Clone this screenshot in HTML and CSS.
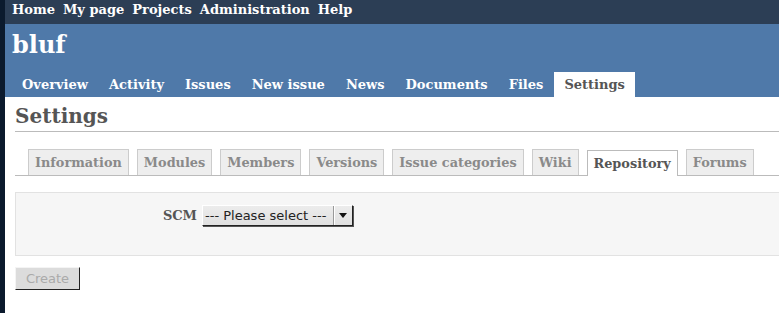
FILE: index.html
```html
<!DOCTYPE html>
<html lang="en">
<head>
    <meta charset="UTF-8">
    <title>bluf - Settings</title>
    <link rel="stylesheet" href="styles.css">
</head>
<body>
    <div class="wrapper">
        <div class="top-menu">
            <a href="#">Home</a>
            <a href="#">My page</a>
            <a href="#">Projects</a>
            <a href="#">Administration</a>
            <a href="#">Help</a>
        </div>

        <div class="header">
            <h1>bluf</h1>
            <ul class="main-menu">
                <li><a href="#">Overview</a></li>
                <li><a href="#">Activity</a></li>
                <li><a href="#">Issues</a></li>
                <li><a href="#">New issue</a></li>
                <li><a href="#">News</a></li>
                <li><a href="#">Documents</a></li>
                <li><a href="#">Files</a></li>
                <li><a href="#" class="selected">Settings</a></li>
            </ul>
        </div>

        <div class="content">
            <h2>Settings</h2>

            <ul class="tabs">
                <li><a href="#">Information</a></li>
                <li><a href="#">Modules</a></li>
                <li><a href="#">Members</a></li>
                <li><a href="#">Versions</a></li>
                <li><a href="#">Issue categories</a></li>
                <li><a href="#">Wiki</a></li>
                <li><a href="#" class="selected">Repository</a></li>
                <li><a href="#">Forums</a></li>
            </ul>

            <form>
                <div class="box">
                    <p class="field">
                        <label for="scm">SCM</label>
                        <span class="select-wrap">
                            <select id="scm">
                                <option>--- Please select ---</option>
                            </select>
                            <span class="select-arrow"></span>
                        </span>
                    </p>
                </div>
                <button type="submit" class="btn" disabled>Create</button>
            </form>
        </div>
    </div>
</body>
</html>
```

FILE: styles.css
```css
body {
    margin: 0;
    font-family: 'DejaVu Serif', serif;
    font-size: 13px;
    background-color: #fff;
    overflow: hidden;
}
.wrapper {
    border-left: 5px solid #0b1a2d;
    min-height: 100vh;
}
.top-menu {
    background-color: #2c3e55;
    height: 24px;
    line-height: 20px;
    padding-left: 7px;
    display: flex;
    gap: 8px;
}
.top-menu a {
    color: #fff;
    font-weight: bold;
    text-decoration: none;
}
.header {
    background-color: #4f79a9;
    height: 73px;
    padding-left: 7px;
    display: flex;
    flex-direction: column;
    justify-content: space-between;
}
.header h1 {
    margin: 0;
    color: #fff;
    font-size: 24px;
    line-height: 40px;
    padding-top: 1px;
}
.main-menu {
    list-style: none;
    margin: 0;
    padding: 0;
    display: flex;
}
.main-menu a {
    display: block;
    color: #fff;
    font-weight: bold;
    text-decoration: none;
    padding: 0 10px;
    margin-right: 1px;
    height: 25px;
    line-height: 25px;
}
.main-menu a.selected {
    background-color: #fff;
    color: #555;
}
.content {
    padding: 5px 0 0 10px;
}
.content h2 {
    margin: 0;
    color: #555;
    font-size: 20px;
    line-height: 28px;
    padding-bottom: 1px;
    border-bottom: 1px solid #bbb;
}
.tabs {
    list-style: none;
    margin: 17px 0 0 0;
    padding: 0 0 0 13px;
    display: flex;
    border-bottom: 1px solid #bbb;
}
.tabs li {
    flex-shrink: 0;
}
.tabs a {
    display: block;
    margin-right: 8px;
    padding: 0 6px;
    height: 25px;
    line-height: 25px;
    background-color: #eee;
    border: 1px solid #ccc;
    border-bottom: none;
    color: #8a8a8a;
    font-size: 12.85px;
    font-weight: bold;
    text-decoration: none;
    white-space: nowrap;
}
.tabs a.selected {
    background-color: #fff;
    border-color: #bbb;
    color: #555;
    position: relative;
    top: 1px;
}
.box {
    margin-top: 16px;
    background-color: #f6f6f6;
    border: 1px solid #e2e2e2;
    border-right: none;
    height: 62px;
}
.field {
    margin: 12px 0 0 0;
    display: flex;
    align-items: center;
}
.field label {
    width: 181px;
    text-align: right;
    font-weight: bold;
    color: #555;
    padding-right: 5px;
}
.select-wrap {
    display: inline-flex;
    align-items: stretch;
    height: 19px;
    background: linear-gradient(#ececec, #e0e0e0);
    border: 1px solid;
    border-color: #fff #222 #222 #fff;
    box-shadow: 1px 1px 0 #555;
}
.select-wrap select {
    appearance: none;
    -webkit-appearance: none;
    border: none;
    background: transparent;
    font-family: 'DejaVu Sans', sans-serif;
    font-size: 13px;
    color: #222;
    padding: 0 3px 0 2px;
    width: 130px;
    margin: 0;
}
.select-arrow {
    width: 18px;
    border-left: 1px solid #999;
    box-shadow: inset 1px 0 0 #fff;
    display: flex;
    align-items: center;
    justify-content: center;
}
.select-arrow::after {
    content: '';
    border-left: 4px solid transparent;
    border-right: 4px solid transparent;
    border-top: 5px solid #111;
}
.btn {
    margin-top: 11px;
    width: 65px;
    height: 23px;
    font-family: 'DejaVu Sans', sans-serif;
    font-size: 13px;
    color: #aaa;
    background-color: #dcdcdc;
    border: 1px solid;
    border-color: #f4f4f4 #222 #222 #f4f4f4;
    padding: 0;
}
```
